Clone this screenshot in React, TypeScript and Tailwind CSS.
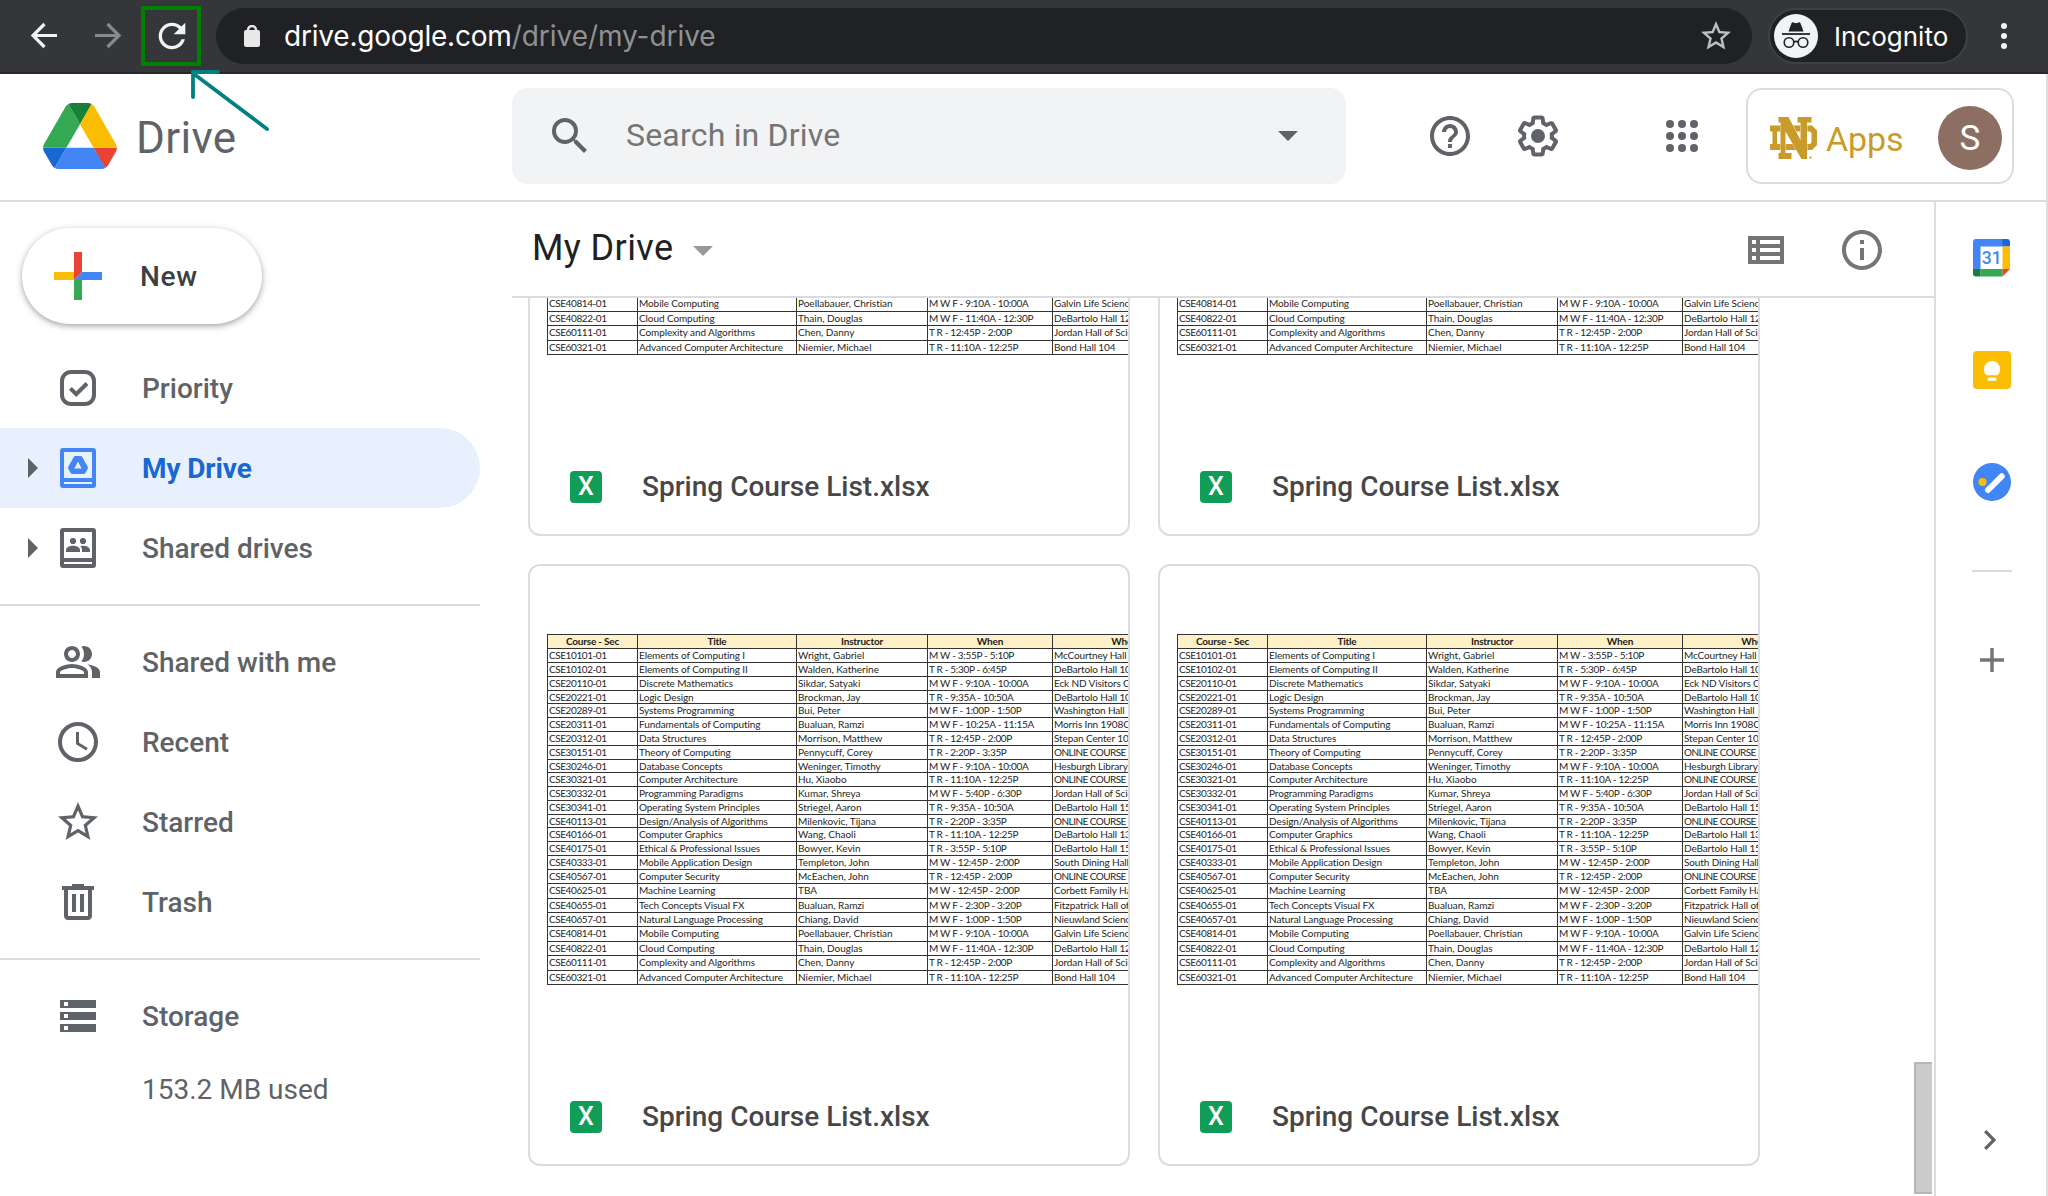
import React from 'react';

type Row = [string, string, string, string, string];

const HEADERS = ['Course - Sec', 'Title', 'Instructor', 'When', 'Where'];

const ROWS: Row[] = [
  ['CSE10101-01', 'Elements of Computing I', 'Wright, Gabriel', 'M W - 3:55P - 5:10P', 'McCourtney Hall'],
  ['CSE10102-01', 'Elements of Computing II', 'Walden, Katherine', 'T R - 5:30P - 6:45P', 'DeBartolo Hall 102'],
  ['CSE20110-01', 'Discrete Mathematics', 'Sikdar, Satyaki', 'M W F - 9:10A - 10:00A', 'Eck ND Visitors Center'],
  ['CSE20221-01', 'Logic Design', 'Brockman, Jay', 'T R - 9:35A - 10:50A', 'DeBartolo Hall 102'],
  ['CSE20289-01', 'Systems Programming', 'Bui, Peter', 'M W F - 1:00P - 1:50P', 'Washington Hall'],
  ['CSE20311-01', 'Fundamentals of Computing', 'Bualuan, Ramzi', 'M W F - 10:25A - 11:15A', 'Morris Inn 1908C'],
  ['CSE20312-01', 'Data Structures', 'Morrison, Matthew', 'T R - 12:45P - 2:00P', 'Stepan Center 10'],
  ['CSE30151-01', 'Theory of Computing', 'Pennycuff, Corey', 'T R - 2:20P - 3:35P', 'ONLINE COURSE'],
  ['CSE30246-01', 'Database Concepts', 'Weninger, Timothy', 'M W F - 9:10A - 10:00A', 'Hesburgh Library'],
  ['CSE30321-01', 'Computer Architecture', 'Hu, Xiaobo', 'T R - 11:10A - 12:25P', 'ONLINE COURSE'],
  ['CSE30332-01', 'Programming Paradigms', 'Kumar, Shreya', 'M W F - 5:40P - 6:30P', 'Jordan Hall of Science'],
  ['CSE30341-01', 'Operating System Principles', 'Striegel, Aaron', 'T R - 9:35A - 10:50A', 'DeBartolo Hall 155'],
  ['CSE40113-01', 'Design/Analysis of Algorithms', 'Milenkovic, Tijana', 'T R - 2:20P - 3:35P', 'ONLINE COURSE'],
  ['CSE40166-01', 'Computer Graphics', 'Wang, Chaoli', 'T R - 11:10A - 12:25P', 'DeBartolo Hall 131'],
  ['CSE40175-01', 'Ethical & Professional Issues', 'Bowyer, Kevin', 'T R - 3:55P - 5:10P', 'DeBartolo Hall 155'],
  ['CSE40333-01', 'Mobile Application Design', 'Templeton, John', 'M W - 12:45P - 2:00P', 'South Dining Hall'],
  ['CSE40567-01', 'Computer Security', 'McEachen, John', 'T R - 12:45P - 2:00P', 'ONLINE COURSE'],
  ['CSE40625-01', 'Machine Learning', 'TBA', 'M W - 12:45P - 2:00P', 'Corbett Family Hall'],
  ['CSE40655-01', 'Tech Concepts Visual FX', 'Bualuan, Ramzi', 'M W F - 2:30P - 3:20P', 'Fitzpatrick Hall of'],
  ['CSE40657-01', 'Natural Language Processing', 'Chiang, David', 'M W F - 1:00P - 1:50P', 'Nieuwland Science'],
  ['CSE40814-01', 'Mobile Computing', 'Poellabauer, Christian', 'M W F - 9:10A - 10:00A', 'Galvin Life Science'],
  ['CSE40822-01', 'Cloud Computing', 'Thain, Douglas', 'M W F - 11:40A - 12:30P', 'DeBartolo Hall 126'],
  ['CSE60111-01', 'Complexity and Algorithms', 'Chen, Danny', 'T R - 12:45P - 2:00P', 'Jordan Hall of Science'],
  ['CSE60321-01', 'Advanced Computer Architecture', 'Niemier, Michael', 'T R - 11:10A - 12:25P', 'Bond Hall 104'],
];

const COL_TRACKING = [
  'tracking-[-0.42px]',
  'tracking-[-0.09px]',
  'tracking-[-0.02px]',
  'tracking-[-0.32px]',
  'tracking-[-0.12px]',
];

function Icon({ d, size = 'size-12', className = '' }: { d: string; size?: string; className?: string }) {
  return (
    <svg viewBox="0 0 24 24" className={`${size} shrink-0 ${className}`} fill="currentColor" fillRule="evenodd">
      <path d={d} />
    </svg>
  );
}

const STAR =
  'M22 9.24l-7.19-.62L12 2 9.19 8.63 2 9.24l5.46 4.73L5.82 21 12 17.27 18.18 21l-1.63-7.03L22 9.24zM12 15.4l-3.76 2.27 1-4.28-3.32-2.88 4.38-.38L12 6.1l1.71 4.04 4.38.38-3.32 2.88 1 4.28L12 15.4z';
const SEARCH =
  'M15.5 14h-.79l-.28-.27A6.471 6.471 0 0 0 16 9.5 6.5 6.5 0 1 0 9.5 16c1.61 0 3.09-.59 4.23-1.57l.27.28v.79l5 4.99L20.49 19l-4.99-5zm-6 0C7.01 14 5 11.99 5 9.5S7.01 5 9.5 5 14 7.01 14 9.5 11.99 14 9.5 14z';
const HELP =
  'M11 18h2v-2h-2v2zm1-16C6.48 2 2 6.48 2 12s4.48 10 10 10 10-4.48 10-10S17.52 2 12 2zm0 18c-4.41 0-8-3.59-8-8s3.59-8 8-8 8 3.59 8 8-3.59 8-8 8zm0-14c-2.21 0-4 1.79-4 4h2c0-1.1.9-2 2-2s2 .9 2 2c0 2-3 1.75-3 5h2c0-2.25 3-2.5 3-5 0-2.21-1.79-4-4-4z';
const GEAR =
  'M13.85 22.25h-3.7c-.74 0-1.36-.54-1.45-1.27l-.27-1.89c-.27-.14-.53-.29-.79-.46l-1.8.72c-.7.26-1.47-.03-1.81-.65L2.2 15.53c-.35-.66-.2-1.44.36-1.88l1.53-1.19c-.01-.15-.02-.3-.02-.46 0-.15.01-.31.02-.46l-1.52-1.19c-.59-.45-.74-1.26-.37-1.88l1.85-3.19c.34-.62 1.11-.9 1.79-.63l1.81.73c.26-.17.52-.32.78-.46l.27-1.91c.09-.7.71-1.25 1.44-1.25h3.7c.74 0 1.36.54 1.45 1.27l.27 1.89c.27.14.53.29.79.46l1.8-.72c.71-.26 1.48.03 1.82.65l1.84 3.18c.36.66.2 1.44-.36 1.88l-1.52 1.19c.01.15.02.3.02.46s-.01.31-.02.46l1.52 1.19c.56.45.72 1.23.37 1.86l-1.86 3.22c-.34.62-1.11.9-1.8.63l-1.8-.72c-.26.17-.52.32-.78.46l-.27 1.91c-.1.68-.72 1.22-1.46 1.22zm-3.23-2h2.76l.37-2.55.53-.22c.44-.18.88-.44 1.34-.78l.45-.34 2.38.96 1.38-2.4-2.03-1.58.07-.56c.03-.26.06-.51.06-.78s-.03-.53-.06-.78l-.07-.56 2.03-1.58-1.39-2.4-2.39.96-.45-.35c-.42-.32-.87-.58-1.33-.77l-.52-.22-.37-2.55h-2.76l-.37 2.55-.53.21c-.44.19-.88.44-1.34.79l-.45.33-2.38-.95-1.39 2.39 2.03 1.58-.07.56a7 7 0 0 0-.06.79c0 .26.02.53.06.78l.07.56-2.03 1.58 1.38 2.4 2.39-.96.45.35c.43.33.86.58 1.33.77l.53.22.38 2.55zM12 8.5a3.5 3.5 0 1 1 0 7 3.5 3.5 0 0 1 0-7z';
const RELOAD =
  'M17.65 6.35C16.2 4.9 14.21 4 12 4c-4.42 0-7.99 3.58-7.99 8s3.57 8 7.99 8c3.73 0 6.84-2.55 7.73-6h-2.08c-.82 2.33-3.04 4-5.65 4-3.31 0-6-2.69-6-6s2.69-6 6-6c1.66 0 3.14.69 4.22 1.78L13 11h7V4l-2.35 2.35z';
const INFO =
  'M11 7h2v2h-2zm0 4h2v6h-2zm1-9C6.48 2 2 6.48 2 12s4.48 10 10 10 10-4.48 10-10S17.52 2 12 2zm0 18c-4.41 0-8-3.59-8-8s3.59-8 8-8 8 3.59 8 8-3.59 8-8 8z';
const PEOPLE =
  'M16.67 13.13C18.04 14.06 19 15.32 19 17v3h4v-3c0-2.18-3.57-3.47-6.33-3.87zM15 12c2.21 0 4-1.79 4-4s-1.79-4-4-4c-.47 0-.91.1-1.33.24C14.5 5.27 15 6.58 15 8s-.5 2.73-1.33 3.76c.42.14.86.24 1.33.24zM9 12c2.21 0 4-1.79 4-4s-1.79-4-4-4-4 1.79-4 4 1.79 4 4 4zm0-6c1.1 0 2 .9 2 2s-.9 2-2 2-2-.9-2-2 .9-2 2-2zm0 7c-2.67 0-8 1.34-8 4v3h16v-3c0-2.66-5.33-4-8-4zm6 5H3v-.99C3.2 16.29 6.3 15 9 15s5.8 1.29 6 2v1z';
const TRASH =
  'M15 4V3H9v1H4v2h1v13c0 1.1.9 2 2 2h10c1.1 0 2-.9 2-2V6h1V4h-5zm2 15H7V6h10v13zM9 8h2v9H9zm4 0h2v9h-2z';
const STORAGE =
  'M3 20h18v-4H3v4zm2-3h2v2H5v-2zM3 4v4h18V4H3zm4 3H5V5h2v2zm-4 7h18v-4H3v4zm2-3h2v2H5v-2z';

function PriorityIcon() {
  return (
    <svg viewBox="0 0 48 48" className="size-12 shrink-0" fill="none" stroke="currentColor" strokeWidth="4">
      <rect x="8" y="8" width="32" height="32" rx="9" />
      <path d="M16.4 24.3l5.8 5.8L33 19.5" />
    </svg>
  );
}

function MyDriveIcon() {
  return (
    <svg viewBox="0 0 48 48" className="size-12 shrink-0 text-[#4285f4]" fill="currentColor" fillRule="evenodd">
      <path d="M9 4h30a3 3 0 0 1 3 3v34a3 3 0 0 1-3 3H9a3 3 0 0 1-3-3V7a3 3 0 0 1 3-3zm1 4v26h28V8zm0 30v2h28v-2z" />
      <path d="M21.5 12h5a2 2 0 0 1 1.7 1l5.4 9.6a2.5 2.5 0 0 1 0 2.3l-2.2 4a2.2 2.2 0 0 1-1.9 1.1h-11a2.2 2.2 0 0 1-1.9-1.1l-2.2-4a2.5 2.5 0 0 1 0-2.3L19.8 13a2 2 0 0 1 1.7-1zM24 17.5L20.3 24.5h7.4z" />
    </svg>
  );
}

function SharedDrivesIcon() {
  return (
    <svg viewBox="0 0 48 48" className="size-12 shrink-0" fill="currentColor" fillRule="evenodd">
      <path d="M9 4h30a3 3 0 0 1 3 3v34a3 3 0 0 1-3 3H9a3 3 0 0 1-3-3V7a3 3 0 0 1 3-3zm1 4v26h28V8zm0 30v2h28v-2z" />
      <circle cx="19" cy="17" r="3.1" />
      <circle cx="29" cy="17" r="3.1" />
      <path d="M12 28v-2c0-2.8 4-4.2 7-4.2s7 1.4 7 4.2v2zM28 28v-2.2c0-1.5-.7-2.7-1.8-3.6 .9-.2 1.9-.4 2.8-.4 3 0 7 1.4 7 4.2v2z" />
    </svg>
  );
}

function ClockIcon() {
  return (
    <svg viewBox="0 0 48 48" className="size-12 shrink-0" fill="none" stroke="currentColor">
      <circle cx="24" cy="24" r="18" strokeWidth="4" />
      <path d="M23.5 14v11.5l9.5 5.7" strokeWidth="3" />
    </svg>
  );
}

function NavItem({
  icon,
  label,
  arrow = false,
  active = false,
}: {
  icon: React.ReactNode;
  label: string;
  arrow?: boolean;
  active?: boolean;
}) {
  return (
    <div
      className={`flex h-20 w-[480px] items-center rounded-r-full text-[28px] font-medium ${
        active ? 'bg-[#e8f0fe]' : ''
      }`}
    >
      <div className="flex w-[54px] shrink-0 pl-7">
        {arrow && (
          <svg viewBox="0 0 10 20" className="h-5 w-2.5" fill="currentColor">
            <path d="M0 0l10 10L0 20z" />
          </svg>
        )}
      </div>
      {icon}
      <span className={`pt-0.5 pl-10 ${active ? 'font-bold tracking-[-0.1px] text-[#1967d2]' : ''}`}>{label}</span>
    </div>
  );
}

function BrowserBar() {
  return (
    <div className="flex h-[74px] shrink-0 items-start border-b-2 border-[#28292c] bg-[#35363a] font-['Inter',sans-serif]">
      <div className="flex h-[72px] w-[216px] shrink-0 items-center pl-[30px]">
        <svg viewBox="0 0 28 28" className="size-7" fill="none" stroke="#f1f3f4" strokeWidth="3.2">
          <path d="M27 13.5H3.5M14.5 2L3 13.5 14.5 25" />
        </svg>
        <svg viewBox="0 0 28 28" className="ml-9 size-7" fill="none" stroke="#88898b" strokeWidth="3.2">
          <path d="M1 13.5h23.5M13.5 2L25 13.5 13.5 25" />
        </svg>
        <div className="ml-[19px] flex h-[60px] w-[60px] items-center justify-center border-4 border-[#008000] pl-0.5">
          <Icon d={RELOAD} size="size-10" className="text-[#f1f3f4]" />
        </div>
      </div>
      <div className="mt-2 flex h-14 w-[1536px] shrink-0 items-center rounded-full bg-[#202124] pr-[18px] pl-7">
        <svg viewBox="0 0 16 22" className="h-[22px] w-4" fill="none">
          <rect y="5" width="16" height="17" rx="2" fill="#e8e8e9" />
          <path d="M4 7V5a4 4 0 0 1 8 0v2" stroke="#e8e8e9" strokeWidth="2.4" />
        </svg>
        <span className="ml-6 text-[28px] tracking-[-0.2px] whitespace-nowrap text-white">
          drive.google.com<span className="tracking-[-0.05px] text-[#909193]">/drive/my-drive</span>
        </span>
        <Icon d={STAR} size="size-9" className="ml-auto text-[#bdbec0]" />
      </div>
      <div className="mt-2 ml-4 flex h-14 w-[200px] shrink-0 items-center rounded-full border-2 border-[#3f4044] bg-[#202124] pl-1">
        <svg viewBox="0 0 44 44" className="size-11" fill="none">
          <circle cx="22" cy="22" r="22" fill="#f1f3f4" />
          <path d="M14.5 17.5l3-8.3c.3-.8 1-1 1.7-.7l2.8.8 2.8-.8c.7-.3 1.4-.1 1.7.7l3 8.3z" fill="#202124" />
          <path d="M8 20h28" stroke="#202124" strokeWidth="1.8" />
          <circle cx="15" cy="28.5" r="4.8" stroke="#202124" strokeWidth="1.6" />
          <circle cx="29" cy="28.5" r="4.8" stroke="#202124" strokeWidth="1.6" />
          <path d="M19.8 28c1.5-.9 2.900-.9 4.400 0" stroke="#202124" strokeWidth="1.6" />
        </svg>
        <span className="ml-4 text-[26px] text-white">Incognito</span>
      </div>
      <div className="flex h-[72px] flex-1 flex-col items-center justify-center gap-1 pr-2">
        <span className="size-1.5 rounded-full bg-[#f1f3f4]" />
        <span className="size-1.5 rounded-full bg-[#f1f3f4]" />
        <span className="size-1.5 rounded-full bg-[#f1f3f4]" />
      </div>
    </div>
  );
}

function DriveLogo() {
  return (
    <svg viewBox="0 0 87.3 78" className="h-[66px] w-[74px] shrink-0">
      <path d="m6.6 66.85 3.85 6.65c.8 1.4 1.95 2.5 3.3 3.3l13.75-23.8h-27.5c0 1.55.4 3.1 1.2 4.5z" fill="#1967d2" />
      <path d="m43.65 25-13.75-23.8c-1.35.8-2.5 1.9-3.3 3.3l-25.4 44a9.06 9.06 0 0 0 -1.2 4.5h27.5z" fill="#34a853" />
      <path d="m73.55 76.8c1.35-.8 2.5-1.9 3.3-3.3l1.6-2.75 7.65-13.25c.8-1.4 1.2-2.95 1.2-4.5h-27.502l5.852 11.5z" fill="#ea4335" />
      <path d="m43.65 25 13.75-23.8c-1.35-.8-2.9-1.2-4.5-1.2h-18.5c-1.6 0-3.15.45-4.5 1.2z" fill="#188038" />
      <path d="m59.8 53h-32.3l-13.75 23.8c1.35.8 2.9 1.2 4.5 1.2h50.8c1.6 0 3.15-.45 4.5-1.2z" fill="#4285f4" />
      <path d="m73.4 26.5-12.7-22c-.8-1.4-1.95-2.5-3.3-3.3l-13.75 23.8 16.15 28h27.45c0-1.55-.4-3.1-1.2-4.5z" fill="#fbbc04" />
    </svg>
  );
}

function MonogramLogo() {
  return (
    <svg viewBox="0 0 47 42" className="h-[42px] w-[47px] shrink-0" fill="#c99b2b" fillRule="evenodd">
      <path d="M0 8.500h42l5 5v14.500l-5 5H0v-6h2.500v-12.500H0zM7 14.500v12.500h33l1.500-1.500v-9.500l-1.500-1.500z" />
      <path
        d="M8.500 0h10L30.500 23V5.500H27.500V0H41.500V5.500H37V42H31.500L15.500 14.500V36H21.500V42H8.500V36H10.500V5.500H8.500z"
        stroke="#fff"
        strokeWidth="0.7"
        paintOrder="stroke"
      />
      <rect x="39.5" y="39.5" width="2" height="2" />
    </svg>
  );
}

function Header() {
  return (
    <header className="flex h-32 shrink-0 items-start border-b-2 border-[#dadce0] pt-3.5 text-[#5f6368]">
      <div className="flex h-24 w-[512px] shrink-0 items-center pl-[43px]">
        <DriveLogo />
        <span className="mt-[3px] ml-[19px] text-[44px] leading-[52px] tracking-[0.3px]">Drive</span>
      </div>
      <div className="flex h-24 w-[834px] shrink-0 items-center rounded-2xl bg-[#f1f3f4] pr-12 pl-[34px]">
        <Icon d={SEARCH} />
        <span className="mb-0.5 ml-8 text-[32px] tracking-[0.2px] text-[#757575]">Search in Drive</span>
        <svg viewBox="0 0 20 10" className="ml-auto h-2.5 w-5" fill="currentColor">
          <path d="M0 0h20L10 10z" />
        </svg>
      </div>
      <div className="flex h-24 flex-1 items-center pl-20">
        <Icon d={HELP} />
        <Icon d={GEAR} className="ml-10" />
        <div className="ml-[104px] grid grid-cols-3 gap-1">
          {Array.from({ length: 9 }, (_, i) => (
            <span key={i} className="size-2 rounded-full bg-[#5f6368]" />
          ))}
        </div>
      </div>
      <div className="mr-8 flex h-24 w-[268px] shrink-0 items-center rounded-2xl border-2 border-[#dadce0] pt-1 pl-[22px]">
        <MonogramLogo />
        <span className="mt-0.5 ml-[9px] text-[34px] tracking-[-0.1px] text-[#c99b2b]">Apps</span>
        <span className="mr-2.5 ml-auto flex size-16 items-center justify-center rounded-full bg-[#8d6e63] pt-0.5 text-[35px] text-white">
          S
        </span>
      </div>
    </header>
  );
}

function Sidebar() {
  return (
    <nav className="flex w-[512px] shrink-0 flex-col text-[#5f6368]">
      <button className="mt-[26px] ml-[22px] flex h-24 w-60 shrink-0 items-center rounded-full bg-white pl-8 text-[28px] font-medium tracking-[0.7px] text-[#3c4043] shadow-[0_2px_4px_0_rgba(60,64,67,0.302),0_2px_6px_2px_rgba(60,64,67,0.149)]">
        <svg viewBox="0 0 48 48" className="size-12">
          <path d="M20 28h8v20h-8z" fill="#34a853" />
          <path d="M0 20h20v8H0z" fill="#fbbc04" />
          <path d="M28 20h20v8H20z" fill="#4285f4" />
          <path d="M20 0h8v20l-8 8z" fill="#ea4335" />
        </svg>
        <span className="pt-0.5 pl-[38px]">New</span>
      </button>
      <div className="mt-6 h-[258px] w-[480px] shrink-0 border-b-2 border-[#dadce0]">
        <NavItem icon={<PriorityIcon />} label="Priority" />
        <NavItem icon={<MyDriveIcon />} label="My Drive" arrow active />
        <NavItem icon={<SharedDrivesIcon />} label="Shared drives" arrow />
      </div>
      <div className="h-[354px] w-[480px] shrink-0 border-b-2 border-[#dadce0] pt-4">
        <NavItem icon={<Icon d={PEOPLE} />} label="Shared with me" />
        <NavItem icon={<ClockIcon />} label="Recent" />
        <NavItem icon={<Icon d={STAR} />} label="Starred" />
        <NavItem icon={<Icon d={TRASH} />} label="Trash" />
      </div>
      <div className="pt-4">
        <NavItem icon={<Icon d={STORAGE} />} label="Storage" />
        <div className="mt-4 pl-[142px] text-[28px] leading-9">153.2 MB used</div>
      </div>
    </nav>
  );
}

function CourseTable() {
  return (
    <div className="grid w-[653px] grid-cols-[90px_159px_131px_125px_147px] grid-rows-[14.3px_repeat(16,13.79px)_repeat(8,14.4px)] border-t border-l border-[#333] font-['Lato',sans-serif] text-[10px] leading-[13.5px] text-[#262626]">
      {HEADERS.map((h) => (
        <div
          key={h}
          className="border-r border-b border-[#333] bg-[#fef0c7] text-center font-bold tracking-[-0.2px] text-[#1a1a1a]"
        >
          {h}
        </div>
      ))}
      {ROWS.map((row) =>
        row.map((cell, c) => (
          <div
            key={`${row[0]}-${c}`}
            className={`border-r border-b border-[#333] pl-px whitespace-nowrap ${
              cell === 'ONLINE COURSE' ? 'tracking-[-0.55px]' : COL_TRACKING[c]
            }`}
          >
            {cell}
          </div>
        )),
      )}
    </div>
  );
}

function FileCard() {
  return (
    <div className="flex h-[602px] w-[602px] shrink-0 flex-col overflow-hidden rounded-xl border-2 border-[#dadce0] bg-white">
      <div className="h-[500px] shrink-0 overflow-hidden pt-[68px] pl-[17px]">
        <CourseTable />
      </div>
      <div className="flex h-[98px] items-center pt-1 pl-10">
        <span className="flex size-8 items-center justify-center rounded-[4px] bg-[#0f9d58] text-[25px] leading-8 font-medium text-white">
          X
        </span>
        <span className="ml-10 text-[28px] font-medium text-[#474747]">Spring Course List.xlsx</span>
      </div>
    </div>
  );
}

function Main() {
  return (
    <main className="flex w-[1424px] shrink-0 flex-col border-r-2 border-[#dadce0]">
      <div className="flex h-24 shrink-0 items-center border-b-2 border-[#dadce0] pr-12 pl-5 text-[#757575]">
        <span className="mb-0.5 text-[36px] leading-[44px] tracking-[0.4px] text-[#202124]">My Drive</span>
        <svg viewBox="0 0 20 10" className="mt-1 ml-5 h-2.5 w-5" fill="#96999c">
          <path d="M0 0h20L10 10z" />
        </svg>
        <svg viewBox="0 0 36 28" className="mt-0.5 ml-auto h-7 w-9" fill="currentColor" fillRule="evenodd">
          <path d="M0 0h36v28H0zM4 4v4h4V4zm8 0v4h20V4zM4 12v4h4v-4zm8 0v4h20v-4zM4 20v4h4v-4zm8 0v4h20v-4z" />
        </svg>
        <Icon d={INFO} className="mt-0.5 ml-[54px]" />
      </div>
      <div className="flex h-[898px] overflow-hidden">
        <div className="flex flex-1 flex-col justify-end pb-[30px] pl-4">
          <div className="grid grid-cols-[602px_602px] gap-7">
            <FileCard />
            <FileCard />
            <FileCard />
            <FileCard />
          </div>
        </div>
        <div className="mt-auto mr-0.5 mb-0.5 h-[132px] w-[18px] border-y-2 border-l-2 border-[#b5b5b5] bg-[#cbcbcb]" />
      </div>
    </main>
  );
}

function SidePanel() {
  return (
    <aside className="flex flex-1 flex-col items-center pt-[37px] pb-[46px] pl-0.5">
      <svg viewBox="0 0 38 38" className="size-[38px] shrink-0">
        <path d="M3 0h27v7.5H7.5V30H0V3a3 3 0 0 1 3-3z" fill="#4285f4" />
        <path d="M29.5 0H34a3 3 0 0 1 3 3v4.5h-7.5z" fill="#1967d2" />
        <path d="M29.5 7.5H37V30h-7.5z" fill="#fbbc04" />
        <path d="M7.5 30h22v7.5h-22z" fill="#34a853" />
        <path d="M0 30h7.5v7.5H3a3 3 0 0 1-3-3z" fill="#188038" />
        <path d="M29.5 30H37l-7.5 7.5z" fill="#ea4335" />
        <text x="18.8" y="25" textAnchor="middle" fontSize="17.5" fontWeight="500" fontFamily="Roboto, sans-serif" fill="#4285f4">
          31
        </text>
      </svg>
      <svg viewBox="0 0 38 38" className="mt-[74px] size-[38px] shrink-0">
        <rect width="38" height="38" rx="4" fill="#fbbc04" />
        <path d="M13.5 24.2a8.2 8.2 0 1 1 11 0z" fill="#fff" />
        <path d="M14.7 26.5h8.6v3.3h-8.6z" fill="#fff" />
      </svg>
      <svg viewBox="0 0 38 38" className="mt-[74px] size-[38px] shrink-0">
        <circle cx="19" cy="19" r="19" fill="#4285f4" />
        <circle cx="9.5" cy="19" r="4" fill="#fbbc04" />
        <path d="M15 27L28.7 13.3" stroke="#fff" strokeWidth="6" strokeLinecap="round" />
      </svg>
      <div className="mt-[69px] h-0.5 w-10 shrink-0 bg-[#dadce0]" />
      <svg viewBox="0 0 24 24" className="mt-[76px] size-6 shrink-0" stroke="#757575" strokeWidth="3.5">
        <path d="M12 0v24M0 12h24" />
      </svg>
      <svg viewBox="0 0 12 20" className="mt-auto mr-1 h-5 w-3" fill="none" stroke="#5f6368" strokeWidth="3.2">
        <path d="M1.2 1.2L10 10l-8.8 8.8" />
      </svg>
    </aside>
  );
}

export default function App() {
  return (
    <div className="relative flex h-[1196px] w-[2048px] flex-col overflow-hidden bg-white font-['Roboto',sans-serif]">
      <BrowserBar />
      <div className="flex h-[1122px] flex-col border-r-2 border-[#dadce0]">
        <Header />
        <div className="flex h-[994px]">
          <Sidebar />
          <Main />
          <SidePanel />
        </div>
      </div>
      <svg
        viewBox="0 0 80 64"
        className="absolute top-[69px] left-[190px] h-16 w-20"
        fill="none"
        stroke="#008080"
        strokeWidth="3.8"
        strokeLinecap="round"
      >
        <path d="M3 28V3h25M4 5l73 55" />
      </svg>
    </div>
  );
}
